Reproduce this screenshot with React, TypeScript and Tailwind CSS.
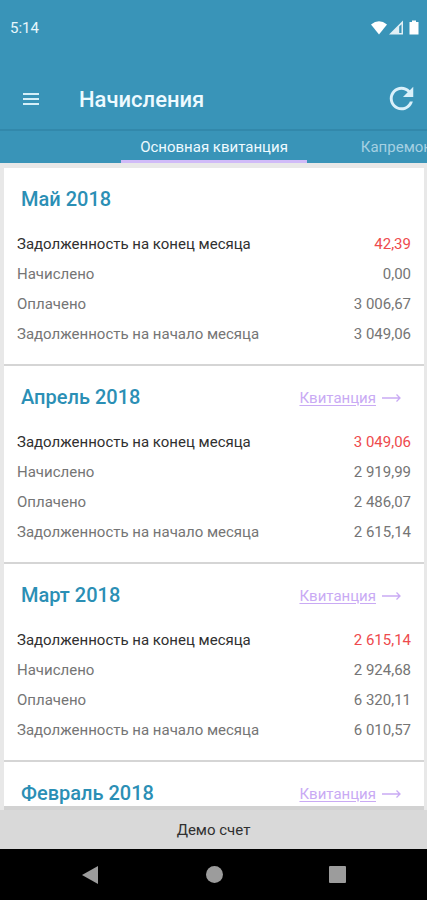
import { useState } from "react";

type Charge = {
  month: string;
  receipt: boolean;
  rows: { label: string; value: string }[];
};

const END = "Задолженность на конец месяца";
const ACCRUED = "Начислено";
const PAID = "Оплачено";
const START = "Задолженность на начало месяца";

const charges: Charge[] = [
  {
    month: "Май 2018",
    receipt: false,
    rows: [
      { label: END, value: "42,39" },
      { label: ACCRUED, value: "0,00" },
      { label: PAID, value: "3 006,67" },
      { label: START, value: "3 049,06" },
    ],
  },
  {
    month: "Апрель 2018",
    receipt: true,
    rows: [
      { label: END, value: "3 049,06" },
      { label: ACCRUED, value: "2 919,99" },
      { label: PAID, value: "2 486,07" },
      { label: START, value: "2 615,14" },
    ],
  },
  {
    month: "Март 2018",
    receipt: true,
    rows: [
      { label: END, value: "2 615,14" },
      { label: ACCRUED, value: "2 924,68" },
      { label: PAID, value: "6 320,11" },
      { label: START, value: "6 010,57" },
    ],
  },
  { month: "Февраль 2018", receipt: true, rows: [] },
];

const tabs = ["Основная квитанция", "Капремонт"];

function StatusBar() {
  return (
    <div className="flex h-14 items-center justify-between pl-[10px] pr-[7px]">
      <span className="text-[#e8f7fc]">5:14</span>
      <svg width="50" height="16" viewBox="0 0 50 16" fill="#fff" aria-hidden="true">
        <path d="M1 4.500Q9 -2 17 4.500L9 14.500Z" />
        <path d="M19 14.500L33 0.500V14.500Z" fillOpacity="0.85" />
        <path d="M29.200 6.500L31.500 4.200V13H29.200Z" fill="#3994b8" />
        <path d="M42 0.500H46V2H48.500V14.500H39.500V2H42Z" />
      </svg>
    </div>
  );
}

function Toolbar() {
  return (
    <div className="mt-3 flex h-[61px] items-center pl-[22px] pr-[13px]">
      <button type="button" aria-label="Меню" className="flex">
        <svg width="18" height="14" viewBox="0 0 18 14" fill="#d5eff8">
          <rect x="1" y="1" width="16" height="2" />
          <rect x="1" y="6" width="16" height="2" />
          <rect x="1" y="11" width="16" height="2" />
        </svg>
      </button>
      <h1 className="ml-[39px] flex-1 pt-[2px] text-[22px] font-medium text-[#eefaff]">Начисления</h1>
      <button type="button" aria-label="Обновить" className="flex">
        <svg width="25" height="25" viewBox="3.500 3.500 17 17" fill="#daf0fa">
          <path d="M17.650 6.350C16.200 4.900 14.210 4 12 4c-4.420 0-7.990 3.580-7.990 8s3.570 8 7.990 8c3.730 0 6.840-2.550 7.730-6h-2.080c-.820 2.330-3.040 4-5.650 4-3.310 0-6-2.690-6-6s2.690-6 6-6c1.660 0 3.140.690 4.220 1.780L13 11h7V4l-2.350 2.350z" />
        </svg>
      </button>
    </div>
  );
}

function ChargeCard({ charge }: { charge: Charge }) {
  return (
    <article className="min-h-[198px] shrink-0 border-b-2 border-[#d5d5d5] bg-white px-[13px]">
      <div className="flex h-[61px] items-center justify-between pl-1 pr-[10px]">
        <h2 className="text-xl font-medium text-[#2b8fb5]">{charge.month}</h2>
        {charge.receipt && (
          <a href="#receipt" className="flex items-center gap-[6px] pt-[3px] text-[#c9aaf4]">
            <span className="underline decoration-1 underline-offset-2">Квитанция</span>
            <svg width="19" height="10" viewBox="0 0 19 10" fill="none" stroke="currentColor" strokeWidth="1.300" aria-hidden="true">
              <path d="M0 5H18M14.500 1.500L18 5L14.500 8.500" />
            </svg>
          </a>
        )}
      </div>
      <dl>
        {charge.rows.map(({ label, value }) => (
          <div key={label} className="flex h-[30px] items-center justify-between">
            <dt className={label === END ? "text-[#303030]" : "text-[#757575]"}>{label}</dt>
            <dd className={label === END ? "text-[#ee4a4d]" : "text-[#757575]"}>{value}</dd>
          </div>
        ))}
      </dl>
    </article>
  );
}

function NavigationBar() {
  return (
    <nav className="flex h-[51px] shrink-0 items-center justify-center gap-[106px] bg-black">
      <button type="button" aria-label="Назад" className="flex">
        <svg width="18" height="20" viewBox="0 0 18 20" fill="#9c9c9c">
          <path d="M0 10L16 1V19Z" />
        </svg>
      </button>
      <button type="button" aria-label="Домой" className="size-[17px] rounded-full bg-[#9c9c9c]" />
      <button type="button" aria-label="Недавние" className="size-[17px] rounded-[1px] bg-[#9c9c9c]" />
    </nav>
  );
}

export default function App() {
  const [active, setActive] = useState(0);
  return (
    <div className="flex h-screen flex-col overflow-hidden bg-[#e8e8e8] font-[Roboto,sans-serif] text-[15px]">
      <header className="shrink-0 bg-[#3994b8]">
        <StatusBar />
        <Toolbar />
        <div role="tablist" className="flex h-[34px] overflow-hidden border-t-2 border-[#3288ab] pl-[121px]">
          {tabs.map((tab, i) => (
            <button
              key={tab}
              type="button"
              role="tab"
              aria-selected={i === active}
              onClick={() => setActive(i)}
              className={
                i === active
                  ? "w-[186px] shrink-0 border-b-3 border-[#d0bbf8] pt-[3px] text-[#eefaff]"
                  : "w-[186px] shrink-0 border-b-3 border-transparent pt-[3px] text-[#a5d0e2]"
              }
            >
              {tab}
            </button>
          ))}
        </div>
      </header>
      <main className="flex min-h-0 flex-1 flex-col pt-[5px] pl-1 pr-[3px]">
        <div className="flex min-h-0 flex-1 flex-col overflow-hidden">
          {charges.map((charge) => (
            <ChargeCard key={charge.month} charge={charge} />
          ))}
        </div>
        <div className="h-1 shrink-0 bg-[#d2d2d2]" />
      </main>
      <footer className="flex h-[39px] shrink-0 items-center justify-center bg-[#d9d9d9] pt-[2px] text-[#303030]">
        Демо счет
      </footer>
      <NavigationBar />
    </div>
  );
}
